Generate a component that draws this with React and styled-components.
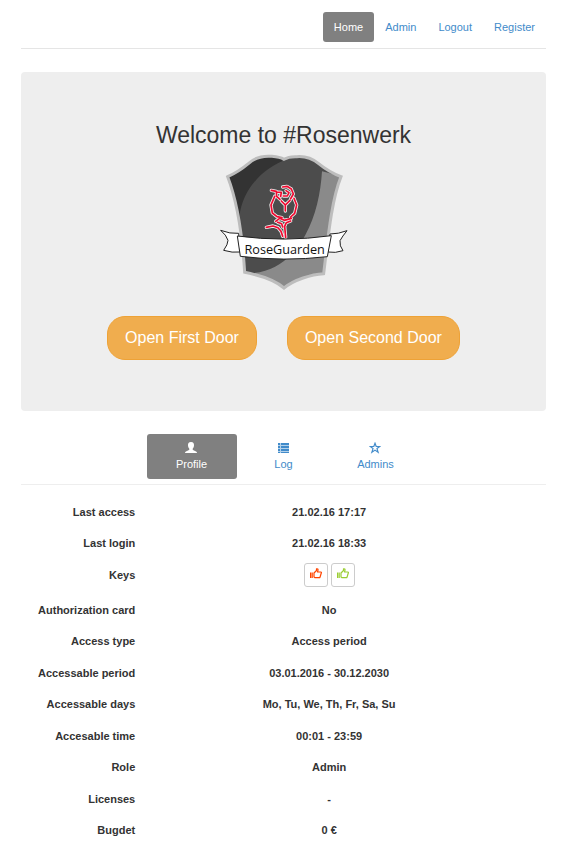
import React from "react";
import styled, { createGlobalStyle } from "styled-components";

const GlobalStyle = createGlobalStyle`
  * { box-sizing: border-box; }
  body {
    margin: 0;
    background: #fff;
    color: #333;
    font-family: "Liberation Sans", Arial, sans-serif;
    font-size: 11px;
    line-height: 16px;
  }
`;

const Page = styled.div`
  padding: 12px 26px 0 21px;
`;

const TopNav = styled.nav`
  display: flex;
  justify-content: flex-end;
  padding-bottom: 6px;
  border-bottom: 1px solid #e5e5e5;
`;

const NavLink = styled.a`
  padding: 7px 11px;
  border-radius: 3px;
  text-decoration: none;
  color: ${(p) => (p.$active ? "#fff" : "#428bca")};
  background: ${(p) => (p.$active ? "#808080" : "transparent")};
`;

const Hero = styled.header`
  display: flex;
  flex-direction: column;
  align-items: center;
  margin-top: 23px;
  padding: 49px 20px 51px;
  border-radius: 4px;
  background: #eee;
`;

const Title = styled.h1`
  margin: 0 0 4px;
  font-size: 23px;
  line-height: 28px;
  font-weight: 400;
`;

const Doors = styled.div`
  display: flex;
  flex-wrap: wrap;
  justify-content: center;
  gap: 30px;
  margin-top: 25px;
`;

const DoorButton = styled.button`
  padding: 10px 17px;
  border: 1px solid #eea236;
  border-radius: 18px;
  background: #f0ad4e;
  color: #fff;
  font-family: inherit;
  font-size: 16px;
  line-height: 22px;
`;

const Tabs = styled.nav`
  display: flex;
  justify-content: center;
  gap: 2px;
  margin-top: 23px;
  padding-bottom: 5px;
  border-bottom: 1px solid #eee;
`;

const Tab = styled.a`
  display: flex;
  flex-direction: column;
  align-items: center;
  width: 90px;
  padding: 8px 0 7px;
  border-radius: 3px;
  text-decoration: none;
  color: ${(p) => (p.$active ? "#fff" : "#428bca")};
  background: ${(p) => (p.$active ? "#808080" : "transparent")};

  svg { margin: 0 2px 2px 0; }
`;

const Details = styled.table`
  width: 100%;
  margin-top: 19px;
  border-collapse: collapse;
  table-layout: fixed;
  font-weight: 700;
`;

const Row = styled.tr`
  height: 31px;
  vertical-align: top;

  &:nth-child(2), &:nth-child(2n + 5) { height: 32px; }
  &:nth-child(3) { height: 35px; }
`;

const Label = styled.th`
  width: 25%;
  padding: 0 17px 0 0;
  text-align: right;
  white-space: nowrap;
`;

const Value = styled.td`
  padding: 0 40px 0 0;
  text-align: center;
`;

const Keys = styled.div`
  display: flex;
  justify-content: center;
  gap: 3px;
  margin: -4px 0;
`;

const KeyButton = styled.button`
  display: flex;
  align-items: flex-start;
  justify-content: center;
  width: 24px;
  height: 24px;
  padding: 4px 0;
  border: 1px solid #ccc;
  border-radius: 3px;
  background: #fff;
  color: ${(p) => p.$color};
`;

const Wordmark = styled.text`
  font-family: "Open Sans", sans-serif;
  font-size: 38px;
  font-weight: 500;
`;

const shield =
  "M47 95 Q80 80 110 55 Q138 30 180 34 Q204 36 216 43 Q230 34 254 35 Q291 32 320 56 Q352 82 387 95 C357 170 347 290 335 386 C299 388 246 404 216 429 C187 404 134 389 98 382 C92 285 76 170 47 95Z";

const rose =
  "M178 136 L193 139 L194 154 L204 163 M194 141 L208 142 L206 154 M212 126 L225 124 L238 132 L244 147 L236 161 M222 137 L231 143 L226 153 L214 153 M208 168 L220 180 L220 198 M220 180 L234 166 M188 154 L177 180 L181 204 L195 215 L210 218 M246 160 L254 180 L248 205 L236 216 M191 229 L203 220 L217 226 L238 220 M236 228 L223 233 L218 244 L221 277 M197 232 L209 236 L212 246 M163 247 L183 243 L198 248 L207 259 L212 274";

const Crest = () => (
  <svg width="128" height="138" viewBox="24 24 384 414" role="img" aria-label="RoseGuarden">
    <defs>
      <clipPath id="shield">
        <path d={shield} />
      </clipPath>
    </defs>
    <g clipPath="url(#shield)">
      <rect x="24" y="24" width="384" height="414" fill="#8a8a8a" />
      <path d="M40 20 H400 V96 L330 79 C326 145 311 215 280 270 C247 334 178 398 80 383Z" fill="#4c4c4c" />
      <path d="M40 20 H225 V43 C155 68 92 130 82 215 L40 95Z" fill="#333" />
    </g>
    <path d={shield} fill="none" stroke="#bdbdbd" strokeWidth="9" />
    <g fill="none" strokeLinejoin="round" strokeLinecap="round">
      <path d={rose} stroke="#eee" strokeWidth="10" />
      <path d={rose} stroke="#f00a30" strokeWidth="5" />
    </g>
    <g fill="#fff" stroke="#222" strokeWidth="3" strokeLinejoin="round">
      <path d="M26 256 Q54 267 80 265 L84 321 Q61 324 35 316 Q48 298 48 286 Q43 270 26 256Z" />
      <path d="M405 257 Q380 267 354 267 L348 321 Q370 325 393 317 Q382 303 384 287 Q391 274 405 257Z" />
      <path d="M76 273 Q216 292 358 272 L346 335 Q216 350 85 334Z" />
    </g>
    <Wordmark x="218" y="326" textAnchor="middle" fill="#111">RoseGuarden</Wordmark>
  </svg>
);

const UserIcon = () => (
  <svg width="12" height="12" viewBox="0 0 12 12" fill="currentColor" aria-hidden="true">
    <path d="M6 0C3.600 0 2.800 1.600 3 3.500C3.100 5 3.700 6 4.300 6.700V7.800C3.500 8.600 1.500 8.900.6 9.700Q0 10.200 0 11H12Q12 10.200 11.400 9.700C10.500 8.900 8.500 8.600 7.700 7.800V6.700C8.300 6 8.900 5 9 3.500C9.200 1.600 8.400 0 6 0Z" />
  </svg>
);

const ListIcon = () => (
  <svg width="12" height="12" viewBox="0 0 12 12" fill="currentColor" aria-hidden="true">
    <path d="M1 1h2v2H1zM4 1h8v2H4zM1 4h2v2H1zM4 4h8v2H4zM1 7h2v2H1zM4 7h8v2H4zM1 10h2v1H1zM4 10h8v1H4z" />
    <path d="M1 1h11v10H1z" fillOpacity="0.4" />
  </svg>
);

const StarIcon = () => (
  <svg width="12" height="12" viewBox="0 0 12 12" fill="none" stroke="currentColor" strokeWidth="1.2" aria-hidden="true">
    <path d="M6 1.300L7.200 4.500H10.800L8 6.600L9.100 10.200L6 8.100L2.900 10.200L4 6.600L1.200 4.500H4.800Z" />
  </svg>
);

const ThumbIcon = () => (
  <svg width="12" height="11" viewBox="0 0 12 11" fill="none" stroke="currentColor" strokeWidth="1.2" aria-hidden="true">
    <path d="M.6 4.500V10M2.200 4.500V10" />
    <path d="M4 5L6.500 2.500V.8Q8.200.5 8 2.200L7.500 4H10.800Q11.800 4.300 11.200 5.300L10 9.200Q9.800 9.700 9.200 9.700H5L4 9Z" strokeLinejoin="round" />
  </svg>
);

const links = ["Home", "Admin", "Logout", "Register"];

const tabs = [
  ["Profile", UserIcon],
  ["Log", ListIcon],
  ["Admins", StarIcon],
];

const rows = [
  ["Last access", "21.02.16 17:17"],
  ["Last login", "21.02.16 18:33"],
  ["Keys", null],
  ["Authorization card", "No"],
  ["Access type", "Access period"],
  ["Accessable period", "03.01.2016 - 30.12.2030"],
  ["Accessable days", "Mo, Tu, We, Th, Fr, Sa, Su"],
  ["Accesable time", "00:01 - 23:59"],
  ["Role", "Admin"],
  ["Licenses", "-"],
  ["Bugdet", "0 €"],
];

export default function App() {
  return (
    <Page>
      <GlobalStyle />
      <TopNav aria-label="Main">
        {links.map((name, i) => (
          <NavLink key={name} href="#" $active={i === 0}>{name}</NavLink>
        ))}
      </TopNav>
      <Hero>
        <Title>Welcome to #Rosenwerk</Title>
        <Crest />
        <Doors>
          <DoorButton>Open First Door</DoorButton>
          <DoorButton>Open Second Door</DoorButton>
        </Doors>
      </Hero>
      <Tabs aria-label="Account">
        {tabs.map(([name, Icon], i) => (
          <Tab key={name} href="#" $active={i === 0}>
            <Icon />
            {name}
          </Tab>
        ))}
      </Tabs>
      <Details>
        <tbody>
          {rows.map(([label, value]) => (
            <Row key={label}>
              <Label scope="row">{label}</Label>
              <Value>
                {value ?? (
                  <Keys>
                    <KeyButton $color="#ff4500" aria-label="First door key"><ThumbIcon /></KeyButton>
                    <KeyButton $color="#9acd32" aria-label="Second door key"><ThumbIcon /></KeyButton>
                  </Keys>
                )}
              </Value>
            </Row>
          ))}
        </tbody>
      </Details>
    </Page>
  );
}
